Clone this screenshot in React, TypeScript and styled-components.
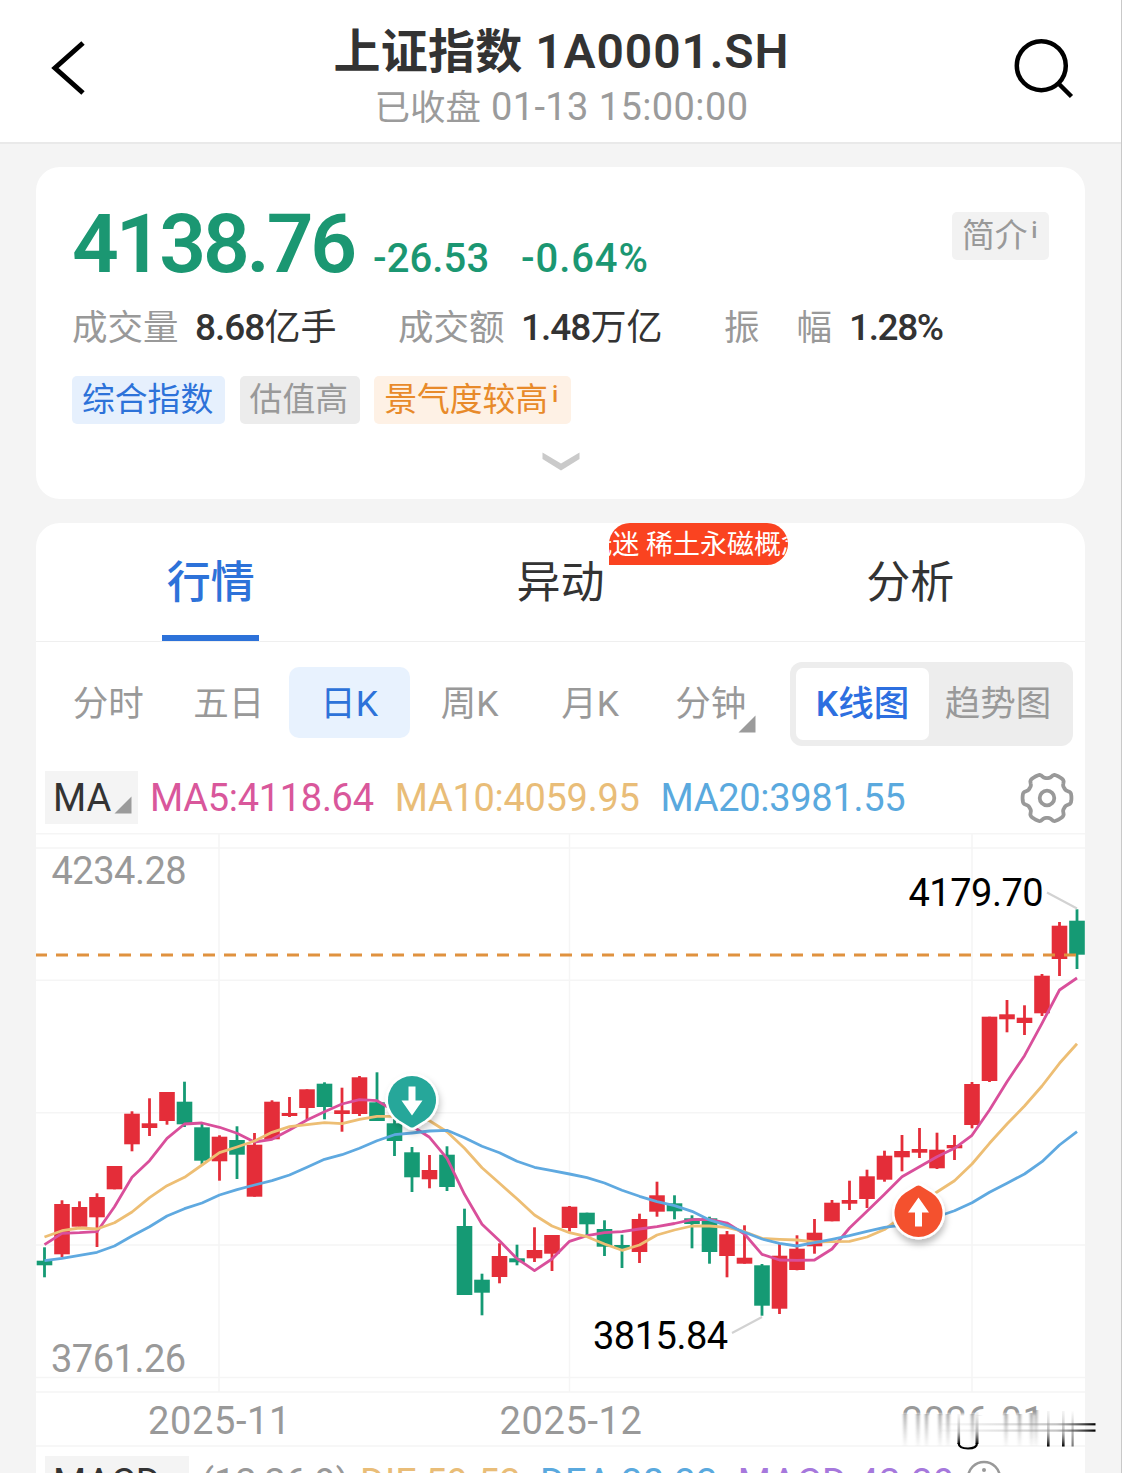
import React from "react";
import styled, { createGlobalStyle } from "styled-components";

const GlobalStyle = createGlobalStyle`
  * { box-sizing: border-box; }
  body { margin: 0; background: #f4f4f4; }
`;

const FONT = 'Roboto, "Noto Sans CJK SC", sans-serif';

const Page = styled.div`
  width: 1122px;
  height: 1473px;
  overflow: hidden;
  background: #f4f4f4;
  border-right: 1px solid #c9c9c9;
  font-family: ${FONT};
  color: #333;
  white-space: nowrap;
`;

const Header = styled.header`
  height: 144px;
  background: #fff;
  border-bottom: 2px solid #e9e9e9;
  display: grid;
  grid-template-columns: 120px 1fr 120px;
`;

const IconButton = styled.button<{ $align: string }>`
  border: 0;
  padding: 0;
  background: none;
  display: flex;
  justify-content: ${(p) => p.$align};
  svg { display: block; }
`;

const TitleBlock = styled.div`
  padding: 24px 0 0 2px;
  display: flex;
  flex-direction: column;
  align-items: center;
`;

const Title = styled.h1`
  margin: 0;
  font-size: 48px;
  font-weight: 600;
  line-height: 56px;
  letter-spacing: 0.9px;
`;

const Subtitle = styled.div`
  font-size: 38px;
  line-height: 54px;
  color: #9b9b9b;
  letter-spacing: 0.4px;
`;

const Cjk = styled.span<{ $size: number; $spacing?: number; $weight?: number }>`
  font-size: ${(p) => p.$size}px;
  letter-spacing: ${(p) => p.$spacing ?? 0}px;
  font-weight: ${(p) => p.$weight ?? "inherit"};
`;

const Card = styled.section<{ $height: number; $top: number }>`
  width: 1049px;
  height: ${(p) => p.$height}px;
  margin: ${(p) => p.$top}px 0 0 36px;
  background: #fff;
  border-radius: 24px;
`;

const SummaryCard = styled(Card)`
  padding: 36px 36px 0;
  display: flex;
  flex-direction: column;
`;

const PriceRow = styled.div`
  height: 82px;
  display: flex;
  align-items: baseline;
  color: #1b9772;
  font-weight: 500;
  line-height: 82px;
`;

const Price = styled.span`
  font-size: 82px;
  font-weight: 600;
  letter-spacing: -3.2px;
  width: 301px;
`;

const Change = styled.span<{ $width: number; $spacing: number }>`
  font-size: 40px;
  line-height: 40px;
  width: ${(p) => p.$width}px;
  letter-spacing: ${(p) => p.$spacing}px;
`;

const Tag = styled.span<{ $bg: string; $color: string; $width: number }>`
  width: ${(p) => p.$width}px;
  height: 48px;
  padding-left: 10px;
  border-radius: 5px;
  background: ${(p) => p.$bg};
  color: ${(p) => p.$color};
  font-size: 32.8px;
  line-height: 49px;
  font-weight: 400;
  display: flex;
`;

const IntroTag = styled(Tag)`
  align-self: flex-start;
  margin: 9px 0 0 auto;
`;

const InfoMark = styled.span`
  font-size: 22px;
  font-weight: 600;
  line-height: 38px;
  margin-left: 4px;
`;

const Stats = styled.div`
  margin-top: 20px;
  height: 45px;
  display: grid;
  grid-template-columns: 326px 326px 1fr;
  line-height: 45px;
  font-size: 37px;
`;

const Stat = styled.div`
  display: flex;
  align-items: baseline;
`;

const StatLabel = styled.span<{ $gap?: number }>`
  width: ${(p) => (p.$gap ? 125 : 123)}px;
  display: flex;
  gap: ${(p) => p.$gap ?? 0}px;
  font-size: 35.5px;
  color: #999;
`;

const StatValue = styled.span<{ $spacing?: number }>`
  font-weight: 500;
  letter-spacing: ${(p) => p.$spacing ?? -1}px;
`;

const Tags = styled.div`
  margin-top: 26px;
  display: flex;
  gap: 14.6px;
`;

const Expand = styled.div`
  margin-top: 28px;
  display: flex;
  justify-content: center;
`;

const Tabs = styled.nav`
  height: 119px;
  display: grid;
  grid-template-columns: repeat(3, 1fr);
  border-bottom: 1px solid #efefef;
`;

const Tab = styled.div<{ $active?: boolean }>`
  position: relative;
  display: flex;
  flex-direction: column;
  align-items: center;
  justify-content: space-between;
  font-size: 44px;
  line-height: 120px;
  color: ${(p) => (p.$active ? "#2d72d9" : "#333")};
  font-weight: ${(p) => (p.$active ? 500 : 400)};
`;

const TabLabel = styled.span`
  height: 112px;
`;

const Underline = styled.span`
  width: 97px;
  height: 6px;
  background: #2d72d9;
`;

const Badge = styled.span`
  position: absolute;
  left: 223px;
  top: 0;
  width: 179px;
  height: 42px;
  padding-right: 3px;
  border-radius: 21px 21px 21px 0;
  background: #fa4320;
  color: #fff;
  overflow: hidden;
  font-size: 27px;
  line-height: 44px;
  font-weight: 400;
  display: flex;
  justify-content: center;
`;

const Controls = styled.div`
  height: 122px;
  padding: 20px 12px 0;
  display: flex;
  justify-content: space-between;
  font-size: 35.5px;
  color: #999;
`;

const Periods = styled.div`
  margin-top: 5px;
  display: grid;
  grid-template-columns: repeat(6, 120.5px);
`;

const Period = styled.div<{ $active?: boolean }>`
  height: 71px;
  line-height: 74px;
  border-radius: 10px;
  display: flex;
  justify-content: center;
  color: ${(p) => (p.$active ? "#2d72d9" : "#999")};
  background: ${(p) => (p.$active ? "#e8f2fe" : "transparent")};
`;

const Corner = styled.svg`
  display: block;
  width: 18px;
  height: 18px;
`;

const PeriodCorner = styled(Corner)`
  margin: 48px -10px 0 -8px;
`;

const Toggle = styled.div`
  width: 283px;
  height: 84px;
  padding: 6px;
  background: #ededed;
  border-radius: 12px;
  display: grid;
  grid-template-columns: 133px 1fr;
`;

const ToggleItem = styled.div<{ $active?: boolean }>`
  height: 72px;
  line-height: 73px;
  text-align: center;
  border-radius: 7px;
  color: ${(p) => (p.$active ? "#2d6fe0" : "#999")};
  background: ${(p) => (p.$active ? "#fff" : "transparent")};
  font-weight: ${(p) => (p.$active ? 500 : 400)};
`;

const IndicatorRow = styled.div<{ $height: number; $top: number }>`
  height: ${(p) => p.$height}px;
  padding: ${(p) => p.$top}px 11px 0 9px;
  display: flex;
  align-items: flex-start;
  font-size: 38px;
  line-height: 55px;
`;

const Picker = styled.div<{ $width: number }>`
  width: ${(p) => p.$width}px;
  height: 53px;
  padding-left: 8px;
  background: #f4f4f4;
  display: flex;
  color: #333;
`;

const PickerCorner = styled(Corner)`
  margin: 25px 0 0 3px;
`;

const Reading = styled.span<{ $color: string; $left: number; $spacing?: number }>`
  margin-left: ${(p) => p.$left}px;
  color: ${(p) => p.$color};
  letter-spacing: ${(p) => p.$spacing ?? 0}px;
`;

const GearButton = styled.span`
  margin-left: auto;
  svg { display: block; }
`;

const InfoIcon = styled.svg`
  display: block;
  margin: 4px 0 0 11px;
`;

const Chart = styled.svg`
  display: block;
  overflow: visible;
  position: relative;
  font-family: ${FONT};
  font-size: 38px;
`;

type Candle = [up: 0 | 1, high: number, low: number, top: number, bottom: number];

const candles: Candle[] = [
  [0, 1247.3, 1277.3, 1260.7, 1265.3], [1, 1200.3, 1257.3, 1204, 1254.3], [1, 1201.3, 1226.7, 1207, 1226.7],
  [1, 1193.3, 1247, 1197, 1217.3], [1, 1166, 1189.3, 1166, 1189.3], [1, 1111.3, 1151.3, 1113.7, 1144.3],
  [1, 1098.3, 1136, 1123.3, 1128], [1, 1092, 1124.7, 1092, 1121], [0, 1081.7, 1127, 1101.7, 1124.3],
  [0, 1124, 1164, 1127.3, 1160.7], [1, 1135.3, 1180.7, 1136.7, 1161.3], [0, 1126.3, 1179, 1140, 1154.7],
  [1, 1133, 1196.7, 1144.7, 1196.7], [1, 1100.3, 1139.3, 1101.7, 1139.3], [1, 1097, 1117, 1113, 1116],
  [1, 1089.3, 1119.3, 1089.3, 1108], [0, 1082.3, 1119.3, 1083.7, 1107], [1, 1087.7, 1131.7, 1110.3, 1114],
  [1, 1076, 1116, 1077.3, 1114], [0, 1072.3, 1121, 1102.3, 1121], [0, 1119, 1156, 1123.3, 1141],
  [0, 1147, 1192, 1152.3, 1177.3], [1, 1155, 1188.3, 1170, 1179.3], [0, 1146.3, 1191, 1154.7, 1187],
  [0, 1208.7, 1295, 1226, 1295], [0, 1273.7, 1315.3, 1279.7, 1292.7], [1, 1243.3, 1283.3, 1256, 1277],
  [0, 1244.7, 1265.3, 1258.3, 1262.3], [1, 1227.3, 1262, 1250, 1258.3], [1, 1235, 1271, 1235, 1253.7],
  [1, 1206, 1231.7, 1206.7, 1228], [0, 1212.7, 1236, 1212.7, 1224.3], [0, 1220.3, 1256, 1229, 1246.7],
  [0, 1234.7, 1268, 1245, 1249], [1, 1213.7, 1263, 1219, 1252], [1, 1181.7, 1216.7, 1195.3, 1211.7],
  [0, 1195.3, 1219.3, 1203.3, 1211.3], [0, 1215.3, 1248.3, 1218.3, 1224], [0, 1216.7, 1263.7, 1218.3, 1252],
  [1, 1231, 1277.3, 1234.3, 1256], [1, 1225.3, 1263.7, 1257.7, 1263.7], [0, 1264, 1315.7, 1265.3, 1305.7],
  [1, 1243.3, 1314, 1255.7, 1308.7], [1, 1235.3, 1270.3, 1248.7, 1270], [1, 1219, 1253.7, 1232.7, 1246.3],
  [1, 1200, 1221.3, 1202.7, 1221.3], [1, 1180.7, 1210, 1200, 1203.7], [1, 1169.7, 1208, 1176.3, 1199],
  [1, 1150.7, 1181.7, 1155.7, 1179.7], [1, 1135, 1171.3, 1151, 1157.3], [1, 1128, 1158, 1149, 1152.7],
  [1, 1132.7, 1169, 1149.7, 1168.3], [1, 1135, 1160, 1145, 1148.3], [1, 1082, 1128.3, 1084, 1125],
  [1, 1016.7, 1082, 1016.7, 1081], [1, 1000, 1032.3, 1014.3, 1019.3], [1, 1005.3, 1035, 1017.7, 1023],
  [1, 974, 1016, 975.7, 1013.3], [1, 922, 976, 925.7, 959], [0, 909.3, 969, 920.7, 954.7],
];

const ma5 = [
  1244.7, 1233.3, 1232.7, 1231.7, 1206.7, 1177.3, 1160.7, 1138.3, 1124, 1123, 1127.3, 1133.3, 1142, 1139.3, 1130,
  1120, 1111.7, 1104, 1099.7, 1100.7, 1111, 1126, 1137.3, 1158.3, 1194.3, 1224.3, 1240.7, 1258.7, 1270.7, 1259,
  1241.3, 1235.7, 1232.7, 1231.7, 1229, 1226.7, 1223.5, 1219.7, 1219.3, 1223, 1234, 1254.3, 1260, 1260.3, 1260,
  1249, 1228, 1211.3, 1194.3, 1176.7, 1166.7, 1156.7, 1148.3, 1135.3, 1110, 1081.7, 1055.7, 1023.3, 990, 978,
];
const ma10 = [
  1237, 1230.7, 1228, 1229, 1222.7, 1212, 1197.7, 1185.7, 1177.3, 1165, 1152.7, 1147, 1141, 1132.3, 1126.7,
  1124.7, 1122.7, 1123.7, 1119.3, 1116.3, 1116.3, 1117, 1120.7, 1131.7, 1148.3, 1167.7, 1183.3, 1198.7, 1215, 1226,
  1232.7, 1236.7, 1244, 1250.3, 1245, 1235, 1230, 1226, 1226, 1227.3, 1231.7, 1238.3, 1239.3, 1240, 1242,
  1241.7, 1241.3, 1237, 1229.5, 1216.7, 1203.3, 1192, 1180.7, 1164, 1143.3, 1124, 1106, 1086, 1063.3, 1043.7,
];
const ma20 = [
  1260.7, 1258.3, 1255.3, 1252.3, 1246, 1236, 1226.7, 1216, 1208.7, 1203, 1195, 1189.7, 1185, 1180.7, 1175,
  1167.3, 1159.3, 1154.7, 1148.3, 1140.7, 1134.7, 1133, 1131, 1130.3, 1137.7, 1146.3, 1152.7, 1161.3, 1167.3, 1170.7,
  1174, 1177.7, 1183, 1190.3, 1196.3, 1201.7, 1205.7, 1211.3, 1220, 1225.3, 1232.3, 1239, 1243.3, 1246, 1242.7,
  1239.3, 1235.7, 1231.3, 1227.3, 1225, 1221, 1216.7, 1210.7, 1202.7, 1192.3, 1183.3, 1174, 1161.7, 1145, 1131.7,
];

const STEP = 17.5;
const xAt = (i: number) => 44.5 + i * STEP;
const toPoints = (values: number[]) => values.map((y, i) => `${xAt(i)},${y}`).join(" ");

const gearPath = (() => {
  const points: string[] = [];
  for (let deg = 0; deg < 360; deg += 3) {
    const a = (deg * Math.PI) / 180;
    const r = 22.1 + (2.3 * Math.tanh(2.4 * (Math.cos(6 * a) + 0.3))) / Math.tanh(2.4);
    points.push(`${(27 + r * Math.cos(a)).toFixed(2)} ${(27 + r * Math.sin(a)).toFixed(2)}`);
  }
  return `M${points.join("L")}Z`;
})();

const Triangle = () => <path d="M17.5 0.5V17.5H0.5Z" fill="#9b9b9b" />;

const Pin = ({ x, y, color, up }: { x: number; y: number; color: string; up?: boolean }) => (
  <g transform={`translate(${x} ${y})${up ? " rotate(180)" : ""}`}>
    <g filter={up ? "url(#shadowUp)" : "url(#shadow)"}>
      <path
        d="M-13 20.2A24 24 0 1 1 13 20.2L2 27Q0 28 -2 27Z"
        fill={color}
        stroke="#fff"
        strokeWidth="5"
        strokeLinejoin="round"
        paintOrder="stroke"
      />
    </g>
    <path d="M-3.5 -13.5H3.5V0.5H10.5L0 15.5L-10.5 0.5H-3.5Z" fill="#fff" />
  </g>
);

const stems: [number, number][] = [
  [905, 1414], [918, 1414], [926.5, 1414], [940, 1414], [948, 1414],
  [972.5, 1414], [1006, 1414], [1019.5, 1414], [1031.5, 1413], [1036, 1410],
];

const SmearedDate = () => (
  <g>
    <text x="973" y="1433.5" textAnchor="middle" fill="url(#dateFade)" letterSpacing="0.6">2026-01</text>
    <g filter="url(#soften)">
      {stems.map(([x, y]) => (
        <rect key={x} x={x - 1.6} y={y} width="3.2" height={1446 - y} fill="url(#fadeDown)" />
      ))}
    </g>
    <rect x="957.5" y="1414" width="2.6" height="30" fill="url(#darkDown)" />
    <rect x="975.5" y="1412" width="3" height="32" fill="url(#darkDown)" />
    <path d="M958.5 1443Q959 1448.5 968 1448.5Q977 1448.5 977 1443" fill="none" stroke="#000" strokeWidth="2.2" />
    <rect x="1047" y="1411" width="2.6" height="35.5" fill="url(#darkDown)" />
    <rect x="1062" y="1411" width="2.6" height="35.5" fill="url(#darkDown)" />
    <rect x="1071.5" y="1411" width="2.2" height="35.5" fill="url(#fadeUp)" />
    <rect x="940" y="1423.2" width="155.5" height="2.2" fill="url(#darkRight)" />
    <rect x="940" y="1429.5" width="155.5" height="2.2" fill="url(#darkRight)" />
  </g>
);

const KLineChart = () => (
  <Chart width="1049" height="614" viewBox="36 833 1049 614">
    <defs>
      <filter id="shadow" x="-50%" y="-50%" width="200%" height="200%">
        <feDropShadow dx="2" dy="4" stdDeviation="3" floodOpacity="0.2" />
      </filter>
      <filter id="shadowUp" x="-50%" y="-50%" width="200%" height="200%">
        <feDropShadow dx="-1" dy="-5" stdDeviation="3" floodOpacity="0.25" />
      </filter>
      <filter id="soften" x="-5%" y="-5%" width="110%" height="110%">
        <feGaussianBlur stdDeviation="0.8 0.3" />
      </filter>
      <linearGradient id="dateFade" gradientUnits="userSpaceOnUse" x1="0" y1="1412" x2="0" y2="1416">
        <stop offset="0" stopColor="#999" />
        <stop offset="1" stopColor="#999" stopOpacity="0" />
      </linearGradient>
      <linearGradient id="fadeDown" x1="0" y1="0" x2="0" y2="1">
        <stop offset="0" stopColor="#999" stopOpacity="0.85" />
        <stop offset="1" stopColor="#bbb" stopOpacity="0.1" />
      </linearGradient>
      <linearGradient id="fadeUp" x1="0" y1="0" x2="0" y2="1">
        <stop offset="0" stopColor="#999" stopOpacity="0.02" />
        <stop offset="1" stopColor="#777" />
      </linearGradient>
      <linearGradient id="darkDown" x1="0" y1="0" x2="0" y2="1">
        <stop offset="0" stopColor="#999" stopOpacity="0.1" />
        <stop offset="0.6" stopColor="#777" stopOpacity="0.5" />
        <stop offset="1" stopColor="#000" />
      </linearGradient>
      <linearGradient id="darkRight" x1="0" y1="0" x2="1" y2="0">
        <stop offset="0" stopColor="#aaa" stopOpacity="0.05" />
        <stop offset="0.75" stopColor="#888" stopOpacity="0.5" />
        <stop offset="1" stopColor="#000" />
      </linearGradient>
    </defs>

    <g stroke="#f5f5f5" strokeWidth="1.5">
      {[833.7, 848, 980.3, 1112.7, 1245, 1377.5, 1392, 1446].map((y) => (
        <line key={y} x1="36" x2="1085" y1={y} y2={y} />
      ))}
      {[219, 569.5, 972].map((x) => (
        <line key={x} x1={x} x2={x} y1="834" y2="1392" />
      ))}
    </g>

    <g fill="#999">
      <g letterSpacing="-0.5">
        <text x="51.5" y="883.5">4234.28</text>
        <text x="51" y="1371.5">3761.26</text>
      </g>
      <text x="219.5" y="1433.5" textAnchor="middle" letterSpacing="0.6">2025-11</text>
      <text x="571" y="1433.5" textAnchor="middle" letterSpacing="0.6">2025-12</text>
    </g>

    {candles.map(([up, high, low, top, bottom], i) => {
      const x = xAt(i);
      return (
        <g key={i} fill={up ? "#e42d39" : "#159a74"}>
          <rect x={x - 1.4} y={high} width="2.8" height={low - high} />
          <rect x={x - 7.8} y={top} width="15.6" height={bottom - top} />
        </g>
      );
    })}

    <g fill="none" strokeWidth="2.8" strokeLinejoin="round">
      <polyline points={toPoints(ma5)} stroke="#d94f9b" />
      <polyline points={toPoints(ma10)} stroke="#edbe74" />
      <polyline points={toPoints(ma20)} stroke="#5fa9e0" />
    </g>
    <line x1="36" x2="1085" y1="955" y2="955" stroke="#e0923f" strokeWidth="3" strokeDasharray="12 9" strokeDashoffset="1" />

    <g stroke="#d2d2d2" strokeWidth="2">
      <line x1="1047" y1="892.5" x2="1077" y2="908.5" />
      <line x1="732" y1="1333" x2="762" y2="1317" />
    </g>
    <g fill="#000" letterSpacing="-0.5">
      <text x="908.5" y="906">4179.70</text>
      <text x="593" y="1348.5">3815.84</text>
    </g>

    <Pin x={412} y={1100} color="#27a79a" />
    <Pin x={918.5} y={1213} color="#f4512f" up />
    <SmearedDate />
  </Chart>
);

export default function App() {
  return (
    <Page>
      <GlobalStyle />
      <Header>
        <IconButton $align="flex-start" aria-label="back">
          <svg width="120" height="142" viewBox="0 0 120 142">
            <path d="M83 43L55 68L83 93" fill="none" stroke="#000" strokeWidth="5" />
          </svg>
        </IconButton>
        <TitleBlock>
          <Title><Cjk $size={47} $spacing={0.2}>上证指数</Cjk> 1A0001.SH</Title>
          <Subtitle><Cjk $size={35.5}>已收盘</Cjk> 01-13 15:00:00</Subtitle>
        </TitleBlock>
        <IconButton $align="flex-end" aria-label="search">
          <svg width="120" height="142" viewBox="1001 0 120 142">
            <circle cx="1041.3" cy="65.7" r="24.5" fill="none" stroke="#000" strokeWidth="4.5" />
            <path d="M1059 84L1071.5 96.5" stroke="#000" strokeWidth="4.5" />
          </svg>
        </IconButton>
      </Header>

      <SummaryCard $height={332} $top={23}>
        <PriceRow>
          <Price>4138.76</Price>
          <Change $width={148} $spacing={0.1}>-26.53</Change>
          <Change $width={140} $spacing={0.9}>-0.64%</Change>
          <IntroTag $bg="#f2f2f2" $color="#999" $width={97}>
            简介<InfoMark>i</InfoMark>
          </IntroTag>
        </PriceRow>
        <Stats>
          <Stat>
            <StatLabel>成交量</StatLabel>
            <StatValue>8.68<Cjk $size={36} $weight={400}>亿手</Cjk></StatValue>
          </Stat>
          <Stat>
            <StatLabel>成交额</StatLabel>
            <StatValue>1.48<Cjk $size={36} $weight={400}>万亿</Cjk></StatValue>
          </Stat>
          <Stat>
            <StatLabel $gap={37}><span>振</span><span>幅</span></StatLabel>
            <StatValue $spacing={-1.4}>1.28%</StatValue>
          </Stat>
        </Stats>
        <Tags>
          <Tag $bg="#e6f0fd" $color="#2d72d9" $width={153}>综合指数</Tag>
          <Tag $bg="#ececec" $color="#999" $width={120}>估值高</Tag>
          <Tag $bg="#fef1e5" $color="#e88a2a" $width={197}>景气度较高<InfoMark>i</InfoMark></Tag>
        </Tags>
        <Expand>
          <svg width="38" height="19" viewBox="0 0 38 19">
            <path d="M0.5 0.5L19 11.5L37.5 0.5V7L19 18.5L0.5 7Z" fill="#cacaca" />
          </svg>
        </Expand>
      </SummaryCard>

      <Card $height={980} $top={24}>
        <Tabs>
          <Tab $active><TabLabel>行情</TabLabel><Underline /></Tab>
          <Tab><TabLabel>异动</TabLabel><Badge>低迷 稀土永磁概念</Badge></Tab>
          <Tab><TabLabel>分析</TabLabel></Tab>
        </Tabs>
        <Controls>
          <Periods>
            <Period>分时</Period>
            <Period>五日</Period>
            <Period $active>日K</Period>
            <Period>周K</Period>
            <Period>月K</Period>
            <Period>分钟<PeriodCorner viewBox="0 0 18 18"><Triangle /></PeriodCorner></Period>
          </Periods>
          <Toggle>
            <ToggleItem $active>K线图</ToggleItem>
            <ToggleItem>趋势图</ToggleItem>
          </Toggle>
        </Controls>
        <IndicatorRow $height={69} $top={7}>
          <Picker $width={93}>MA<PickerCorner viewBox="0 0 18 18"><Triangle /></PickerCorner></Picker>
          <Reading $color="#d9579b" $left={12} $spacing={-0.3}>MA5:4118.64</Reading>
          <Reading $color="#e9bd78" $left={21} $spacing={-0.3}>MA10:4059.95</Reading>
          <Reading $color="#5aa9de" $left={21} $spacing={-0.3}>MA20:3981.55</Reading>
          <GearButton>
            <svg width="54" height="54" viewBox="0 0 54 54" fill="none" stroke="#999" strokeWidth="3.8">
              <path d={gearPath} strokeLinejoin="round" />
              <circle cx="27" cy="27" r="7.3" />
            </svg>
          </GearButton>
        </IndicatorRow>
        <KLineChart />
        <IndicatorRow $height={60} $top={9}>
          <Picker $width={144}>MACD</Picker>
          <Reading $color="#999" $left={12}>(12,26,9)</Reading>
          <Reading $color="#e9bd78" $left={11}>DIF:59.53</Reading>
          <Reading $color="#5aa9de" $left={19} $spacing={0.2}>DEA:38.33</Reading>
          <Reading $color="#a678dc" $left={20} $spacing={0.5}>MACD:42.39</Reading>
          <InfoIcon width="36" height="36" viewBox="0 0 36 36">
            <circle cx="18" cy="18" r="16" fill="none" stroke="#999" strokeWidth="2.5" />
            <circle cx="18" cy="10" r="2" fill="#999" />
          </InfoIcon>
        </IndicatorRow>
      </Card>
    </Page>
  );
}
